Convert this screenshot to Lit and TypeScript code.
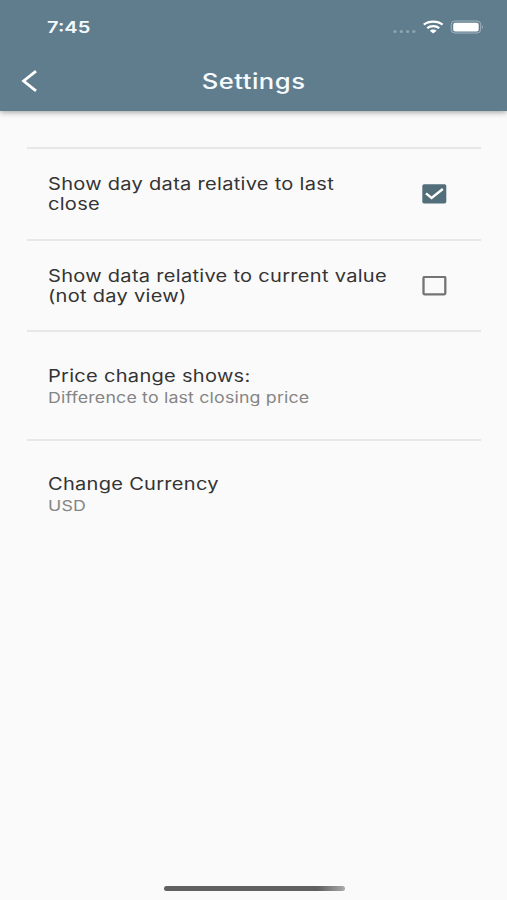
import { LitElement, html, css, svg } from "lit";
import { customElement } from "lit/decorators.js";

@customElement("status-bar")
class StatusBar extends LitElement {
  static styles = css`
    :host { display: flex; align-items: center; justify-content: space-between; height: 54px; padding: 0 24px 0 47px; box-sizing: border-box; }
    .time { font-size: 16.2px; font-weight: 600; line-height: 20px; transform: scaleX(1.24); transform-origin: left; color: #f4f9fd; }
    svg { display: block; }
  `;
  render() {
    return html`
      <span class="time">7:45</span>
      <svg width="92" height="20" viewBox="0 0 92 20">
        ${[4, 10.3, 16.6, 22.9].map((x) => svg`<circle cx=${x} cy="14.5" r="1.6" fill="#8ea4b1"/>`)}
        <g transform="translate(42.2 15.9)" fill="none" stroke="#fff" stroke-width="2.3">
          <path d="M-9.4 -8.2C-4.4 -12.4 4.4 -12.4 9.4 -8.2"/>
          <path d="M-6 -4.7C-2.8 -7.5 2.8 -7.5 6 -4.7"/>
          <path d="M-3.4 -2.2C-1.6 -3.9 1.6 -3.9 3.4 -2.2L0 .7Z" fill="#fff" stroke="none"/>
        </g>
        <rect x="60.2" y="4" width="29.5" height="12" rx="3.6" fill="none" stroke="#a3b5c0" stroke-width="1"/>
        <rect x="62.2" y="5.7" width="25.5" height="8.8" rx="2" fill="#fff"/>
        <path d="M91 8.2Q92.8 10 91 11.8Z" fill="#a3b5c0"/>
      </svg>
    `;
  }
}

@customElement("setting-row")
class SettingRow extends LitElement {
  static properties = {
    lines: { type: Array },
    detail: { type: String },
    checked: { attribute: false },
  };
  declare lines: string[];
  declare detail?: string;
  declare checked?: boolean;
  static styles = css`
    :host { display: flex; align-items: center; justify-content: space-between; box-sizing: border-box; border-top: 2px solid #e7e7e7; padding: 0 34px 0 21px; }
    .line, .detail { display: block; width: max-content; transform: scaleX(1.2); transform-origin: left; }
    .line { font-size: 16.68px; line-height: 20px; color: #343434; letter-spacing: 0.25px; }
    .detail { font-size: 14.8px; line-height: 20px; margin-top: 2px; color: #858585; letter-spacing: 0.15px; }
    svg { display: block; flex: none; }
  `;
  render() {
    return html`
      <div>
        ${this.lines.map((l) => html`<span class="line">${l}</span>`)}
        ${this.detail ? html`<span class="detail">${this.detail}</span>` : null}
      </div>
      ${this.checked === undefined
        ? null
        : html`<svg width="25" height="20" viewBox="0 0 25 20">
            ${this.checked
              ? svg`<rect x=".3" y=".2" width="24" height="19.4" rx="1.8" fill="#526e7a"/><path d="M4 9.3L9.6 14L20.8 5" fill="none" stroke="#fff" stroke-width="2.4"/>`
              : svg`<rect x="1.5" y=".9" width="21.8" height="17.4" rx="1" fill="none" stroke="#747474" stroke-width="2.3"/>`}
          </svg>`}
    `;
  }
}

@customElement("app-root")
class AppRoot extends LitElement {
  static styles = css`
    :host { display: flex; flex-direction: column; height: 900px; background: #fafafa; font-family: Inter, "Liberation Sans", sans-serif; overflow: hidden; }
    header { background: #607d8e; height: 110.5px; flex: none; box-shadow: 0 1px 6px rgba(0, 0, 0, 0.4); }
    .bar { display: grid; grid-template-columns: 60px 1fr 60px; align-items: center; height: 54px; }
    .back { display: block; margin-left: 20px; }
    .title { justify-self: center; font-size: 21px; line-height: 26px; margin-top: 1px; font-weight: 500; color: #f6fbff; transform: scaleX(1.22); letter-spacing: 0.4px; }
    main { flex: 1; padding: 36.5px 26px 0 27px; }
    .check { height: 91.5px; }
    .check + .check { padding-top: 1px; }
    .price { height: 108.5px; padding-top: 3px; }
    .currency { height: 109px; padding-top: 1px; }
    .home { align-self: center; width: 181px; height: 5px; border-radius: 3px; margin: 0 0 9px 1px; background: linear-gradient(90deg, #606060 85%, #aaa); }
  `;
  render() {
    return html`
      <header>
        <status-bar></status-bar>
        <div class="bar">
          <svg class="back" width="18" height="22" viewBox="0 0 18 22"><path d="M16 1.2L3.6 11L16 20.8" fill="none" stroke="#fff" stroke-width="2.8"/></svg>
          <span class="title">Settings</span>
        </div>
      </header>
      <main>
        <setting-row class="check" .lines=${["Show day data relative to last", "close"]} .checked=${true}></setting-row>
        <setting-row class="check" .lines=${["Show data relative to current value", "(not day view)"]} .checked=${false}></setting-row>
        <setting-row class="price" .lines=${["Price change shows:"]} .detail=${"Difference to last closing price"}></setting-row>
        <setting-row class="currency" .lines=${["Change Currency"]} .detail=${"USD"}></setting-row>
      </main>
      <div class="home"></div>
    `;
  }
}
